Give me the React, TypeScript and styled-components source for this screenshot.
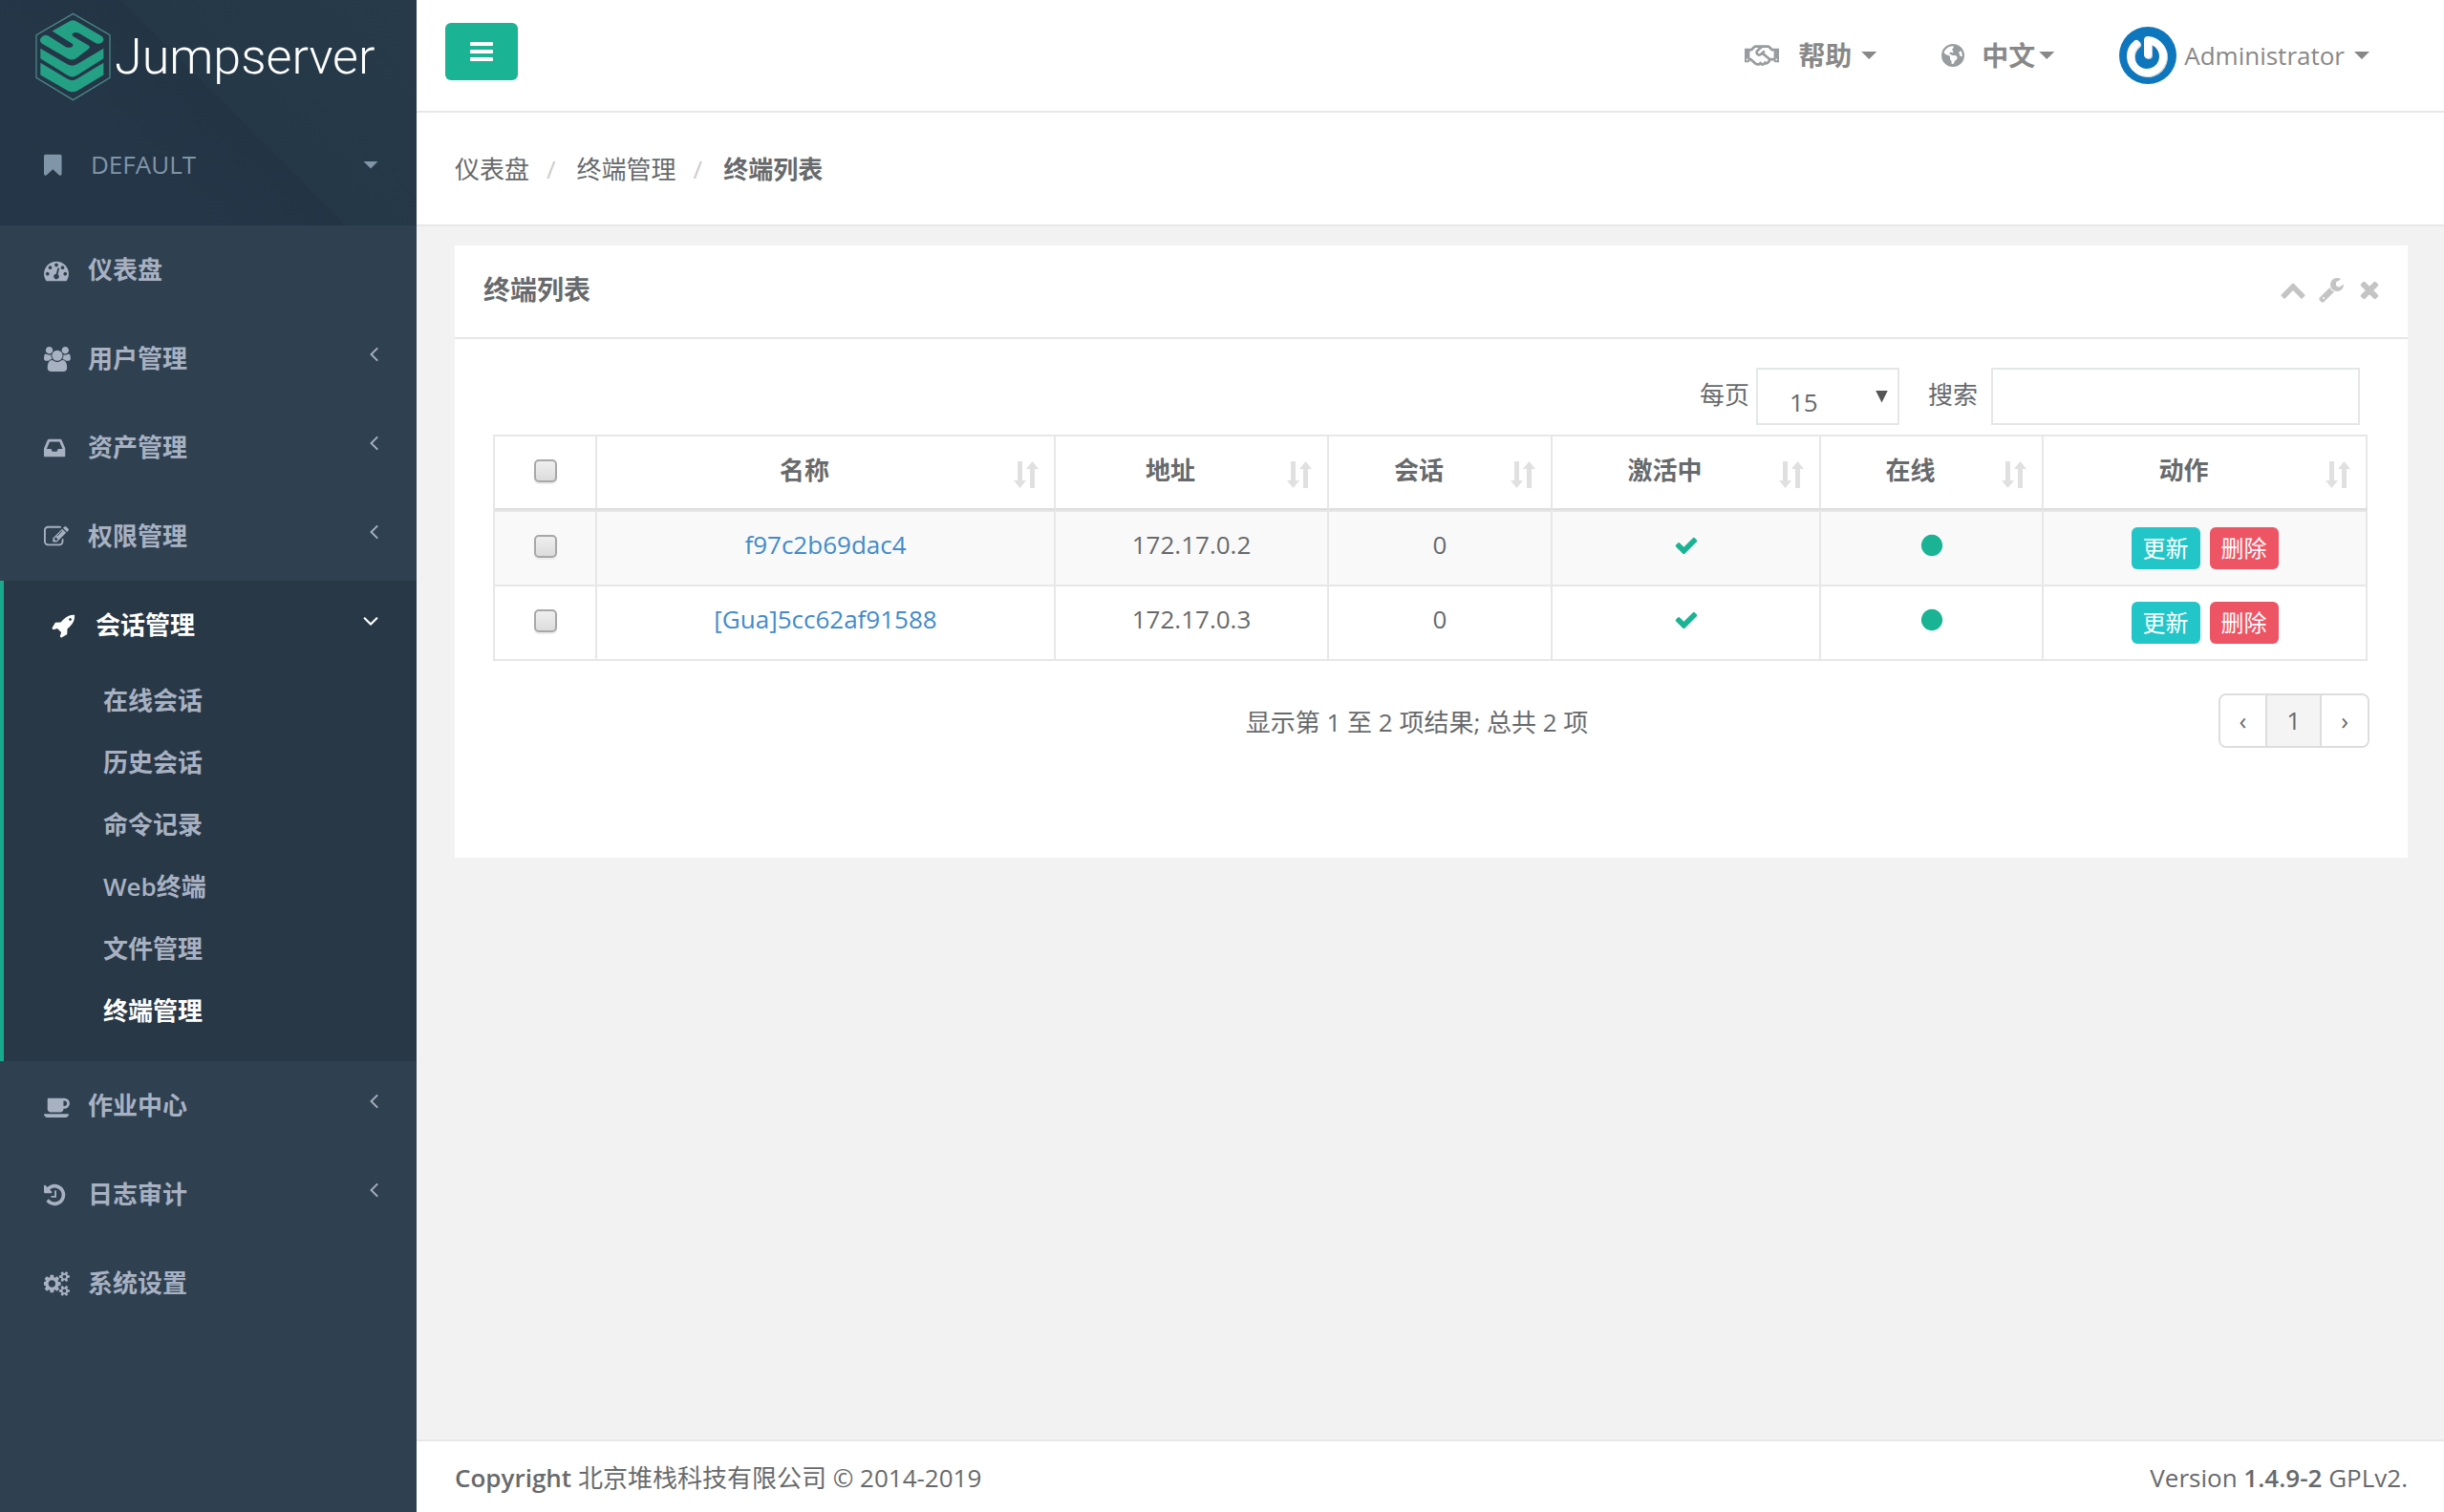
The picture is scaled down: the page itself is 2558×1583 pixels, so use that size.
import React from 'react';
import styled, { createGlobalStyle, css } from 'styled-components';
import { FaRegHandshake } from 'react-icons/fa';
import { FaEarthAmericas } from 'react-icons/fa6';

const GlobalStyle = createGlobalStyle`
  *, *::before, *::after { box-sizing: border-box; }
  body {
    margin: 0;
    background: #2f4050;
    color: #676a6c;
    font-family: "Open Sans", "Noto Sans CJK SC", sans-serif;
    font-size: 26px;
    line-height: 37px;
  }
  a { color: inherit; text-decoration: none; }
  button, input, select { font: inherit; color: inherit; margin: 0; }
  button { cursor: pointer; }
  ul, ol { list-style: none; margin: 0; padding: 0; }
`;

/* ---------- icons ---------- */

const glyphs = {
  bookmark:
    'M1420 128q23 0 44 9 33 13 52.5 41t19.5 62v1289q0 34-19.5 62t-52.5 41q-19 8-44 8-48 0-83-32l-441-424-441 424q-36 33-83 33-23 0-44-9-33-13-52.5-41t-19.5-62v-1289q0-34 19.5-62t52.5-41q21-9 44-9h1048z',
  dashboard:
    'M384 1152q0-53-37.5-90.5t-90.5-37.5-90.5 37.5-37.5 90.5 37.5 90.5 90.5 37.5 90.5-37.5 37.5-90.5zm192-448q0-53-37.5-90.5t-90.5-37.5-90.5 37.5-37.5 90.5 37.5 90.5 90.5 37.5 90.5-37.5 37.5-90.5zm428 481l101-382q6-26-7.5-48.5t-38.5-29.5-48 6.5-30 39.5l-101 382q-60 5-107 43.5t-63 98.5q-20 77 20 146t117 89 146-20 89-117q16-60-6-117t-72-91zm660-33q0-53-37.5-90.5t-90.5-37.5-90.5 37.5-37.5 90.5 37.5 90.5 90.5 37.5 90.5-37.5 37.5-90.5zm-640-640q0-53-37.5-90.5t-90.5-37.5-90.5 37.5-37.5 90.5 37.5 90.5 90.5 37.5 90.5-37.5 37.5-90.5zm448 192q0-53-37.5-90.5t-90.5-37.5-90.5 37.5-37.5 90.5 37.5 90.5 90.5 37.5 90.5-37.5 37.5-90.5zm320 448q0 261-141 483-19 29-54 29h-1402q-35 0-54-29-141-221-141-483 0-182 71-348t191-286 286-191 348-71 348 71 286 191 191 286 71 348z',
  users:
    'M529 896q-162 5-265 128h-134q-82 0-138-40.5t-56-118.5q0-353 124-353 6 0 43.5 21t97.5 42.5 119 21.5q67 0 133-23-5 37-5 66 0 139 81 256zm1071 637q0 120-73 189.5t-194 69.5h-874q-121 0-194-69.5t-73-189.5q0-53 3.5-103.5t14-109 26.5-108.5 43-97.5 62-81 85.5-53.5 111.5-20q10 0 43 21.5t73 48 107 48 135 21.5 135-21.5 107-48 73-48 43-21.5q61 0 111.5 20t85.5 53.5 62 81 43 97.5 26.5 108.5 14 109 3.5 103.5zm-1024-1277q0 106-75 181t-181 75-181-75-75-181 75-181 181-75 181 75 75 181zm704 384q0 159-112.5 271.5t-271.5 112.5-271.5-112.5-112.5-271.5 112.5-271.5 271.5-112.5 271.5 112.5 112.5 271.5zm576 225q0 78-56 118.5t-138 40.5h-134q-103-123-265-128 81-117 81-256 0-29-5-66 66 23 133 23 59 0 119-21.5t97.5-42.5 43.5-21q124 0 124 353zm-128-609q0 106-75 181t-181 75-181-75-75-181 75-181 181-75 181 75 75 181z',
  inbox:
    'M1151 960h316q-1-3-2.5-8.5t-2.5-7.5l-212-496h-708l-212 496q-1 3-2.5 8.5t-2.5 7.5h316l95 192h320zm513 30v482q0 26-19 45t-45 19h-1408q-26 0-45-19t-19-45v-482q0-62 25-123l238-552q10-25 36.5-42t52.5-17h832q26 0 52.5 17t36.5 42l238 552q25 61 25 123z',
  edit:
    'M888 1184l116-116-152-152-116 116v56h96v96h56zm440-720q-16-16-33 1l-350 350q-17 17-1 33t33-1l350-350q17-17 1-33zm80 594v190q0 119-84.5 203.5t-203.5 84.5h-832q-119 0-203.5-84.5t-84.5-203.5v-832q0-119 84.5-203.5t203.5-84.5h832q63 0 117 25 15 7 18 23 3 17-9 29l-49 49q-14 14-32 8-23-6-45-6h-832q-66 0-113 47t-47 113v832q0 66 47 113t113 47h832q66 0 113-47t47-113v-126q0-13 9-22l64-64q15-15 35-7t20 29zm-96-738l288 288-672 672h-288v-288zm444 132l-92 92-288-288 92-92q28-28 68-28t68 28l152 152q28 28 28 68t-28 68z',
  rocket:
    'M1440 448q0-40-28-68t-68-28-68 28-28 68 28 68 68 28 68-28 28-68zm224-288q0 249-75.5 430.5t-253.5 360.5q-81 80-195 176l-20 379q-2 16-16 26l-384 224q-7 4-16 4-12 0-23-9l-64-64q-13-14-8-32l85-276-281-281-276 85q-3 1-9 1-14 0-23-9l-64-64q-17-19-5-39l224-384q10-14 26-16l379-20q96-114 176-195 188-187 358-258t431-71q14 0 24 9.5t10 22.5z',
  coffee:
    'M1664 704q0-80-56-136t-136-56h-64v384h64q80 0 136-56t56-136zm-1664 768h1792q0 106-75 181t-181 75h-1280q-106 0-181-75t-75-181zm1856-768q0 159-112.5 271.5t-271.5 112.5h-64v32q0 92-66 158t-158 66h-704q-92 0-158-66t-66-158v-736q0-26 19-45t45-19h1152q159 0 271.5 112.5t112.5 271.5z',
  history:
    'M1664 896q0 156-61 298t-164 245-245 164-298 61q-172 0-327-72.5t-264-204.5q-7-10-6.5-22.5t8.5-20.5l137-138q10-9 25-9 16 2 23 12 73 95 179 147t225 52q104 0 198.5-40.5t163.5-109.5 109.5-163.5 40.5-198.5-40.5-198.5-109.5-163.5-163.5-109.5-198.5-40.5q-98 0-188 35.5t-160 101.5l137 138q31 30 14 69-17 40-59 40h-448q-26 0-45-19t-19-45v-448q0-42 40-59 39-17 69 14l130 129q107-101 244.5-156.5t284.5-55.5q156 0 298 61t245 164 164 245 61 298zm-640-288v448q0 14-9 23t-23 9h-320q-14 0-23-9t-9-23v-64q0-14 9-23t23-9h224v-352q0-14 9-23t23-9h64q14 0 23 9t9 23z',
  cogs:
    'M832 896q0-106-75-181t-181-75-181 75-75 181 75 181 181 75 181-75 75-181zm768 512q0-52-38-90t-90-38-90 38-38 90q0 53 37.5 90.5t90.5 37.5 90.5-37.5 37.5-90.5zm0-1024q0-52-38-90t-90-38-90 38-38 90q0 53 37.5 90.5t90.5 37.5 90.5-37.5 37.5-90.5zm-384 421v185q0 10-7 19.5t-16 10.5l-155 24q-11 35-32 76 34 48 90 115 7 11 7 20 0 12-7 19-23 30-82.5 89.5t-78.5 59.5q-11 0-21-7l-115-90q-37 19-77 31-11 108-23 155-7 24-30 24h-186q-11 0-20-7.5t-10-17.5l-23-153q-34-10-75-31l-118 89q-7 7-20 7-11 0-21-8-144-133-144-160 0-9 7-19 10-14 41-53t47-61q-23-44-35-82l-152-24q-10-1-17-9.5t-7-19.5v-185q0-10 7-19.5t16-10.5l155-24q11-35 32-76-34-48-90-115-7-11-7-20 0-12 7-20 22-30 82-89t79-59q11 0 21 7l115 90q34-18 77-32 11-108 23-154 7-24 30-24h186q11 0 20 7.5t10 17.5l23 153q34 10 75 31l118-89q8-7 20-7 11 0 21 8 144 133 144 160 0 8-7 19-12 16-42 54t-45 60q23 48 34 82l152 23q10 2 17 10.5t7 19.5zm640 533v140q0 16-149 31-12 27-30 52 51 113 51 138 0 4-4 7-122 71-124 71-8 0-46-47t-52-68q-20 2-30 2t-30-2q-14 21-52 68t-46 47q-2 0-124-71-4-3-4-7 0-25 51-138-18-25-30-52-149-15-149-31v-140q0-16 149-31 13-29 30-52-51-113-51-138 0-4 4-7 4-2 35-20t59-34 30-16q8 0 46 46.5t52 67.5q20-2 30-2t30 2q51-71 92-112l6-2q4 0 124 70 4 3 4 7 0 25-51 138 17 23 30 52 149 15 149 31zm0-1024v140q0 16-149 31-12 27-30 52 51 113 51 138 0 4-4 7-122 71-124 71-8 0-46-47t-52-68q-20 2-30 2t-30-2q-14 21-52 68t-46 47q-2 0-124-71-4-3-4-7 0-25 51-138-18-25-30-52-149-15-149-31v-140q0-16 149-31 13-29 30-52-51-113-51-138 0-4 4-7 4-2 35-20t59-34 30-16q8 0 46 46.5t52 67.5q20-2 30-2t30 2q51-71 92-112l6-2q4 0 124 70 4 3 4 7 0 25-51 138 17 23 30 52 149 15 149 31z',
  bars:
    'M1664 1344v128q0 26-19 45t-45 19h-1408q-26 0-45-19t-19-45v-128q0-26 19-45t45-19h1408q26 0 45 19t19 45zm0-512v128q0 26-19 45t-45 19h-1408q-26 0-45-19t-19-45v-128q0-26 19-45t45-19h1408q26 0 45 19t19 45zm0-512v128q0 26-19 45t-45 19h-1408q-26 0-45-19t-19-45v-128q0-26 19-45t45-19h1408q26 0 45 19t19 45z',
  chevronUp:
    'M1683 1331l-166 165q-19 19-45 19t-45-19l-531-531-531 531q-19 19-45 19t-45-19l-166-165q-19-19-19-45.5t19-45.5l742-741q19-19 45-19t45 19l742 741q19 19 19 45.5t-19 45.5z',
  wrench:
    'M448 1472q0-26-19-45t-45-19-45 19-19 45 19 45 45 19 45-19 19-45zm644-420l-682 682q-37 37-90 37-52 0-91-37l-106-108q-38-36-38-90 0-53 38-91l681-681q39 98 114.5 173.5t173.5 114.5zm634-435q0 39-23 106-47 134-164.5 217.5t-258.5 83.5q-185 0-316.5-131.5t-131.5-316.5 131.5-316.5 316.5-131.5q58 0 121.5 16.5t107.5 46.5q16 11 16 28t-16 28l-293 169v224l193 107q5-3 79-48.5t135.5-81 70.5-35.5q15 0 23.5 10t8.5 25z',
  times:
    'M1490 1322q0 40-28 68l-136 136q-28 28-68 28t-68-28l-294-294-294 294q-28 28-68 28t-68-28l-136-136q-28-28-28-68t28-68l294-294-294-294q-28-28-28-68t28-68l136-136q28-28 68-28t68 28l294 294 294-294q28-28 68-28t68 28l136 136q28 28 28 68t-28 68l-294 294 294 294q28 28 28 68z',
  check:
    'M1671 566q0 40-28 68l-724 724-136 136q-28 28-68 28t-68-28l-136-136-362-362q-28-28-28-68t28-68l136-136q28-28 68-28t68 28l294 295 656-657q28-28 68-28t68 28l136 136q28 28 28 68z',
  circle:
    'M1664 896q0 209-103 385.5t-279.5 279.5-385.5 103-385.5-103-279.5-279.5-103-385.5 103-385.5 279.5-279.5 385.5-103 385.5 103 279.5 279.5 103 385.5z',
  angleLeft:
    'M1203 544q0 13-10 23l-393 393 393 393q10 10 10 23t-10 23l-50 50q-10 10-23 10t-23-10l-466-466q-10-10-10-23t10-23l466-466q10-10 23-10t23 10l50 50q10 10 10 23z',
  angleDown:
    'M1395 736q0 13-10 23l-466 466q-10 10-23 10t-23-10l-466-466q-10-10-10-23t10-23l50-50q10-10 23-10t23 10l393 393 393-393q10-10 23-10t23 10l50 50q10 10 10 23z',
};

type GlyphName = keyof typeof glyphs;

const GlyphSvg = styled.svg`
  display: block;
  flex: none;
  fill: currentColor;
`;

const Glyph = ({ name, size = 28 }: { name: GlyphName; size?: number }) => (
  <GlyphSvg width={size} height={size} viewBox="0 0 1792 1792" aria-hidden="true">
    <path d={glyphs[name]} />
  </GlyphSvg>
);

const MenuGlyph = ({ name, start }: { name: GlyphName; start: number }) => (
  <GlyphSvg width={32} height={26} viewBox={`${start} 0 2206 1792`} aria-hidden="true">
    <path d={glyphs[name]} />
  </GlyphSvg>
);

const Caret = styled.span`
  flex: none;
  width: 16px;
  height: 8px;
  background: currentColor;
  clip-path: polygon(0 0, 100% 0, 50% 100%);
`;

/* ---------- sidebar ---------- */

const Page = styled.div`
  display: flex;
  min-height: 100vh;
`;

const Sidebar = styled.nav`
  flex: none;
  width: 436px;
  background: #2f4050;
  color: #a7b1c2;
  font-weight: 600;
`;

const SidebarTop = styled.div`
  height: 236px;
  padding: 13px 40px 0 37px;
  background: linear-gradient(45deg, #243647 30%, #233545 54%, #253848 54%, #273a4a);
`;

const Brand = styled.a`
  display: flex;
  align-items: center;
  gap: 4px;
  height: 93px;
`;

const BrandName = styled.span`
  color: #fff;
  font-family: Roboto, sans-serif;
  font-size: 52px;
  font-weight: 300;
  line-height: 64px;
`;

const OrgSwitch = styled.button`
  display: flex;
  align-items: center;
  width: 100%;
  margin-top: 48px;
  padding: 0 0 0 9px;
  border: 0;
  background: none;
  color: #8095a8;
  font-weight: 400;
  text-align: left;
`;

const OrgName = styled.span`
  flex: 1;
  padding-left: 17px;
`;

const MenuItem = styled.li<{ $active?: boolean }>`
  ${(p) =>
    p.$active &&
    css`
      padding-bottom: 20px;
      border-left: 4px solid #19aa8d;
      background: #293846;
      color: #fff;
    `}
`;

const MenuLink = styled.a<{ $active?: boolean }>`
  display: flex;
  align-items: center;
  gap: 14px;
  padding: 28px 40px 28px ${(p) => (p.$active ? 50 : 46)}px;
`;

const MenuLabel = styled.span`
  flex: 1;
`;

const Arrow = styled.span`
  display: flex;
  align-items: center;
  justify-content: flex-end;
  width: 18px;
  height: 28px;
  align-self: flex-start;
`;

const SubLink = styled.a<{ $current?: boolean }>`
  display: block;
  padding: 14px 20px 14px 104px;
  color: ${(p) => (p.$current ? '#fff' : '#a7b1c2')};
`;

/* ---------- header ---------- */

const Main = styled.div`
  display: flex;
  flex: 1;
  flex-direction: column;
  min-width: 0;
  background: #f2f2f2;
`;

const TopBar = styled.header`
  display: flex;
  align-items: center;
  justify-content: space-between;
  height: 118px;
  padding: 0 78px 0 30px;
  border-bottom: 2px solid #e7e7e7;
  background: #fff;
`;

const ToggleButton = styled.button`
  display: grid;
  place-items: center;
  align-self: flex-start;
  width: 76px;
  height: 60px;
  margin-top: 24px;
  padding: 0;
  border: 0;
  border-radius: 6px;
  background: #1ab394;
  color: #fff;
`;

const TopActions = styled.div`
  display: flex;
  align-items: center;
  gap: 68px;
  color: #888;
`;

const TopAction = styled.button<{ $gap: number; $strong?: boolean }>`
  display: flex;
  align-items: center;
  gap: ${(p) => p.$gap}px;
  padding: 0;
  border: 0;
  background: none;
  font-size: ${(p) => (p.$strong ? 28 : 26)}px;
  font-weight: ${(p) => (p.$strong ? 600 : 400)};
`;

const ActionIcon = styled.span`
  display: flex;
  margin-right: 10px;
  color: #999c9e;
`;

const LanguageIcon = styled(ActionIcon)`
  margin-right: 14px;
`;

const UserName = styled.span`
  margin-right: 2px;
`;

const Breadcrumb = styled.ol`
  display: flex;
  align-items: center;
  height: 119px;
  padding: 2px 40px 0;
  border-bottom: 2px solid #e7e7e7;
  background: #fff;
`;

const Crumb = styled.li`
  & + &::before {
    content: "/";
    padding: 0 22px 0 18px;
    color: #ccc;
    font-weight: 400;
  }
`;

/* ---------- panel ---------- */

const Content = styled.main`
  flex: 1;
  padding: 20px 38px 20px 40px;
`;

const Panel = styled.section`
  background: #fff;
`;

const PanelHeader = styled.div`
  display: flex;
  align-items: center;
  justify-content: space-between;
  height: 98px;
  padding: 0 26px 4px 30px;
  border-bottom: 2px solid #e7e7e7;
`;

const PanelTitle = styled.h5`
  margin: 0;
  font-size: 28px;
  font-weight: 600;
`;

const PanelTools = styled.div`
  display: flex;
  gap: 12px;
  color: #c4c4c4;
`;

const ToolButton = styled.button`
  padding: 0;
  border: 0;
  background: none;
`;

const PanelBody = styled.div`
  padding: 30px 42px 115px 40px;
`;

const Filters = styled.div`
  display: flex;
  align-items: center;
  justify-content: flex-end;
  gap: 30px;
  padding-right: 8px;
`;

const Field = styled.div<{ $gap: number }>`
  display: flex;
  align-items: center;
  gap: ${(p) => p.$gap}px;
`;

const FieldLabel = styled.label`
  padding-bottom: 4px;
`;

const SelectBox = styled.div`
  display: grid;
  align-items: center;
`;

const PageSize = styled.select`
  grid-area: 1 / 1;
  width: 150px;
  height: 60px;
  padding: 12px 32px 0 33px;
  border: 2px solid #e5e6e7;
  border-radius: 0;
  background: #fff;
  appearance: none;
`;

const SelectArrow = styled.span`
  grid-area: 1 / 1;
  justify-self: end;
  width: 13px;
  height: 13px;
  margin-right: 12px;
  background: #555;
  clip-path: polygon(0 0, 100% 0, 50% 100%);
  pointer-events: none;
`;

const SearchInput = styled.input`
  width: 386px;
  height: 60px;
  padding: 12px 24px;
  border: 2px solid #e5e6e7;
  background: #fff;
`;

const Table = styled.table`
  width: 100%;
  margin-top: 10px;
  border: solid #e7e7e7;
  border-width: 2px 0 0 2px;
  border-spacing: 0;
  table-layout: fixed;
`;

const HeadCell = styled.th`
  height: 77px;
  padding: 16px;
  border-right: 2px solid #e7e7e7;
  border-bottom: 2px solid #ddd;
  font-weight: 600;
  vertical-align: top;
`;

const SortHead = styled.div`
  display: flex;
  align-items: flex-end;
  gap: 18px;
  height: 38px;
`;

const SortLabel = styled.span`
  flex: 1;
  align-self: flex-end;
`;

const Row = styled.tr`
  &:nth-child(odd) { background: #f9f9f9; }
  &:first-child > td { border-top: 2px solid #e7e7e7; }
`;

const Cell = styled.td`
  padding: 16px;
  border-right: 2px solid #e7e7e7;
  border-bottom: 2px solid #e7e7e7;
  text-align: center;
  vertical-align: top;
`;

const Checkbox = styled.input`
  display: block;
  width: 24px;
  height: 24px;
  margin: 8px auto 0;
  border: 2px solid #a8a8a8;
  border-radius: 5px;
  background: linear-gradient(#efefef, #dcdcdc);
  box-shadow: 0 2px 1px #ececec;
  appearance: none;
`;

const NameLink = styled.a`
  color: #428bca;
`;

const Status = styled.span`
  display: flex;
  justify-content: center;
  height: 37px;
  align-items: center;
  color: #1ab394;
`;

const RowActions = styled.div`
  display: flex;
  justify-content: center;
  gap: 10px;
`;

const SmallButton = styled.button<{ $danger?: boolean }>`
  width: 72px;
  height: 44px;
  padding: 0;
  border: 0;
  border-radius: 6px;
  background: ${(p) => (p.$danger ? '#ed5565' : '#23c6c8')};
  color: #fff;
  font-size: 24px;
  line-height: 44px;
`;

const TableFooter = styled.div`
  display: grid;
  grid-template-columns: 1fr auto 1fr;
  margin: 34px -2px 0 0;
`;

const Info = styled.div`
  grid-column: 2;
  padding: 12px 30px 0 0;
`;

const Pagination = styled.ul`
  display: flex;
  justify-self: end;
  border: 2px solid #ddd;
  border-radius: 8px;
  overflow: hidden;
`;

const PageItem = styled.li<{ $current?: boolean }>`
  background: ${(p) => (p.$current ? '#f4f4f4' : '#fff')};
  & + & { border-left: 2px solid #ddd; }
`;

const PageLink = styled.a`
  display: block;
  padding: 8px 20px;
`;

/* ---------- footer ---------- */

const Footer = styled.footer`
  display: flex;
  justify-content: space-between;
  padding: 20px 38px 17px 40px;
  border-top: 2px solid #e7e7e7;
  background: #fff;
`;

const Strong = styled.strong`
  font-weight: 600;
`;

/* ---------- data ---------- */

type Entry = { icon: GlyphName; start: number; label: string; children?: string[]; nested?: boolean };

const menu: Entry[] = [
  { icon: 'dashboard', start: 0, label: '仪表盘' },
  { icon: 'users', start: -64, label: '用户管理', nested: true },
  { icon: 'inbox', start: 128, label: '资产管理', nested: true },
  { icon: 'edit', start: 0, label: '权限管理', nested: true },
  {
    icon: 'rocket',
    start: 0,
    label: '会话管理',
    nested: true,
    children: ['在线会话', '历史会话', '命令记录', 'Web终端', '文件管理', '终端管理'],
  },
  { icon: 'coffee', start: 0, label: '作业中心', nested: true },
  { icon: 'history', start: 128, label: '日志审计', nested: true },
  { icon: 'cogs', start: 0, label: '系统设置' },
];

const currentPage = '终端管理';
const columns = ['名称', '地址', '会话', '激活中', '在线', '动作'];
const columnWidths = [107, 480, 286, 234, 281, 233, 339];
const terminals = [
  { name: 'f97c2b69dac4', address: '172.17.0.2', sessions: 0 },
  { name: '[Gua]5cc62af91588', address: '172.17.0.3', sessions: 0 },
];

const LogoSvg = styled.svg`
  flex: none;
`;

const Logo = () => (
  <LogoSvg width="79" height="93" viewBox="52 40 238 278" aria-hidden="true">
    <path d="M171 43L287 110V245L171 315L55 245V110Z" fill="none" stroke="#4a8585" strokeWidth="4" />
    <g fill="#24a085">
      <path d="M160 67Q170 61 181 67L262 114Q272 124 263 133Q254 141 243 136L188 104Q176 99 169 106Q166 111 172 115L222 144Q226 149 220 154L180 184Q167 192 154 184L72 137Q62 126 71 117Q82 107 93 113L147 147Q158 153 168 147Q174 141 167 137L105 98Z" />
      <path d="M68 153L154 203Q168 210 182 203L267 153V184L184 237Q168 247 153 237L68 184Z" />
      <path d="M68 198L154 249Q168 257 182 249L267 198V236L186 285Q169 295 153 285L68 236Z" />
    </g>
  </LogoSvg>
);

const Avatar = () => (
  <svg width="60" height="60" viewBox="0 0 60 60" aria-hidden="true">
    <circle cx="30" cy="30" r="30" fill="#0e76bc" />
    <g fill="none" strokeLinecap="round" strokeLinejoin="round" strokeWidth="8">
      <path d="M19 19A17 17 0 1 0 31 15V30" stroke="#c9d3da" />
      <path d="M18 18A17 17 0 1 0 30 14V29" stroke="#fff" />
    </g>
  </svg>
);

const SortIcon = () => (
  <svg width="26" height="28" viewBox="0 0 26 28" fill="#e0e0e0" aria-hidden="true">
    <path d="M4 0H9V20H13L6.500 28L0 20H4Z" />
    <path d="M17 28H22V8H26L19.500 0L13 8H17Z" />
  </svg>
);

const App = () => (
  <>
    <GlobalStyle />
    <Page>
      <Sidebar>
        <SidebarTop>
          <Brand href="#">
            <Logo />
            <BrandName>Jumpserver</BrandName>
          </Brand>
          <OrgSwitch type="button">
            <MenuGlyph name="bookmark" start={256} />
            <OrgName>DEFAULT</OrgName>
            <Caret />
          </OrgSwitch>
        </SidebarTop>
        <ul>
          {menu.map((entry) => {
            const open = Boolean(entry.children);
            return (
              <MenuItem key={entry.label} $active={open}>
                <MenuLink href="#" $active={open}>
                  <MenuGlyph name={entry.icon} start={entry.start} />
                  <MenuLabel>{entry.label}</MenuLabel>
                  {entry.nested && (
                    <Arrow>
                      {open ? (
                        <GlyphSvg width="16" height="9" viewBox="384 650 1024 600">
                          <path d={glyphs.angleDown} />
                        </GlyphSvg>
                      ) : (
                        <GlyphSvg width="9" height="16" viewBox="600 448 620 1024">
                          <path d={glyphs.angleLeft} />
                        </GlyphSvg>
                      )}
                    </Arrow>
                  )}
                </MenuLink>
                {entry.children && (
                  <ul>
                    {entry.children.map((child) => (
                      <li key={child}>
                        <SubLink href="#" $current={child === currentPage}>
                          {child}
                        </SubLink>
                      </li>
                    ))}
                  </ul>
                )}
              </MenuItem>
            );
          })}
        </ul>
      </Sidebar>

      <Main>
        <TopBar>
          <ToggleButton type="button" aria-label="菜单">
            <Glyph name="bars" />
          </ToggleButton>
          <TopActions>
            <TopAction type="button" $gap={10} $strong>
              <ActionIcon>
                <FaRegHandshake size={36} />
              </ActionIcon>
              帮助
              <Caret />
            </TopAction>
            <TopAction type="button" $gap={4} $strong>
              <LanguageIcon>
                <FaEarthAmericas size={24} />
              </LanguageIcon>
              中文
              <Caret />
            </TopAction>
            <TopAction type="button" $gap={8}>
              <Avatar />
              <UserName>Administrator</UserName>
              <Caret />
            </TopAction>
          </TopActions>
        </TopBar>

        <Breadcrumb>
          <Crumb>
            <a href="#">仪表盘</a>
          </Crumb>
          <Crumb>
            <a href="#">终端管理</a>
          </Crumb>
          <Crumb>
            <Strong>终端列表</Strong>
          </Crumb>
        </Breadcrumb>

        <Content>
          <Panel>
            <PanelHeader>
              <PanelTitle>终端列表</PanelTitle>
              <PanelTools>
                <ToolButton type="button" aria-label="收起">
                  <Glyph name="chevronUp" />
                </ToolButton>
                <ToolButton type="button" aria-label="设置">
                  <Glyph name="wrench" />
                </ToolButton>
                <ToolButton type="button" aria-label="关闭">
                  <Glyph name="times" />
                </ToolButton>
              </PanelTools>
            </PanelHeader>
            <PanelBody>
              <Filters>
                <Field $gap={7}>
                  <FieldLabel htmlFor="page-size">每页</FieldLabel>
                  <SelectBox>
                    <PageSize id="page-size" defaultValue="15">
                      <option value="15">15</option>
                      <option value="25">25</option>
                      <option value="50">50</option>
                    </PageSize>
                    <SelectArrow />
                  </SelectBox>
                </Field>
                <Field $gap={14}>
                  <FieldLabel htmlFor="search">搜索</FieldLabel>
                  <SearchInput id="search" type="text" />
                </Field>
              </Filters>

              <Table>
                <colgroup>
                  {columnWidths.map((width, i) => (
                    <col key={i} width={width} />
                  ))}
                </colgroup>
                <thead>
                  <tr>
                    <HeadCell>
                      <Checkbox type="checkbox" aria-label="全选" />
                    </HeadCell>
                    {columns.map((column) => (
                      <HeadCell key={column}>
                        <SortHead>
                          <SortLabel>{column}</SortLabel>
                          <SortIcon />
                        </SortHead>
                      </HeadCell>
                    ))}
                  </tr>
                </thead>
                <tbody>
                  {terminals.map((terminal) => (
                    <Row key={terminal.name}>
                      <Cell>
                        <Checkbox type="checkbox" aria-label={terminal.name} />
                      </Cell>
                      <Cell>
                        <NameLink href="#">{terminal.name}</NameLink>
                      </Cell>
                      <Cell>{terminal.address}</Cell>
                      <Cell>{terminal.sessions}</Cell>
                      <Cell>
                        <Status>
                          <Glyph name="check" size={26} />
                        </Status>
                      </Cell>
                      <Cell>
                        <Status>
                          <Glyph name="circle" size={26} />
                        </Status>
                      </Cell>
                      <Cell>
                        <RowActions>
                          <SmallButton type="button">更新</SmallButton>
                          <SmallButton type="button" $danger>
                            删除
                          </SmallButton>
                        </RowActions>
                      </Cell>
                    </Row>
                  ))}
                </tbody>
              </Table>

              <TableFooter>
                <Info>显示第 1 至 2 项结果; 总共 2 项</Info>
                <Pagination>
                  <PageItem>
                    <PageLink href="#" aria-label="上一页">‹</PageLink>
                  </PageItem>
                  <PageItem $current>
                    <PageLink href="#">1</PageLink>
                  </PageItem>
                  <PageItem>
                    <PageLink href="#" aria-label="下一页">›</PageLink>
                  </PageItem>
                </Pagination>
              </TableFooter>
            </PanelBody>
          </Panel>
        </Content>

        <Footer>
          <div>
            <Strong>Copyright</Strong> 北京堆栈科技有限公司 © 2014-2019
          </div>
          <div>
            Version <Strong>1.4.9-2</Strong> GPLv2.
          </div>
        </Footer>
      </Main>
    </Page>
  </>
);

export default App;
